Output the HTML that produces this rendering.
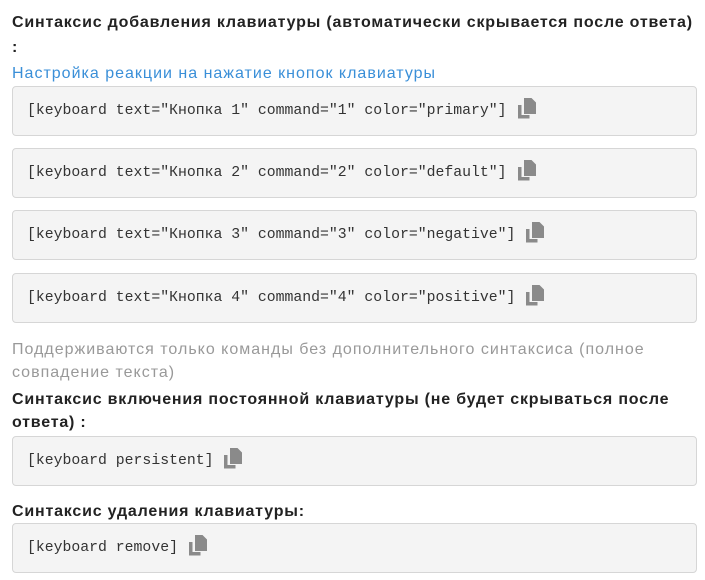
<!DOCTYPE html>
<html><head><meta charset="utf-8"><style>
body{margin:0;background:#fff;width:705px;height:580px;overflow:hidden;font-family:"Liberation Sans","Noto Sans CJK SC",sans-serif;color:#222}
.h{position:absolute;left:12px;font-weight:bold;font-size:16px;line-height:23px;color:#222;letter-spacing:0.8px;white-space:nowrap}
.box{position:absolute;left:12px;width:683px;height:48px;background:#f4f4f4;border:1px solid #d6d6d6;border-radius:4px}
.box span{position:absolute;left:14px;top:16px;font-family:"Liberation Mono",monospace;font-size:14.8px;color:#333;white-space:pre;display:flex;align-items:center}
.box svg{margin-left:10px;margin-top:-6px;flex-shrink:0;width:20px;height:22px}
.t{position:absolute;left:12px;font-size:16px;line-height:23px;letter-spacing:1px;white-space:nowrap}
</style></head><body>
<div class="h" style="top:11px">Синтаксис добавления клавиатуры (автоматически скрывается после ответа)</div>
<div class="h" style="top:36px">:</div>
<div class="t" style="top:62px;color:#3a8fd8">Настройка реакции на нажатие кнопок клавиатуры</div>
<div class="box" style="top:86px"><span>[keyboard text="Кнопка 1" command="1" color="primary"]<svg viewBox="0 0 20 22"><path d="M1 8h3.5v10h8v3.5H1z" fill="#8a8a8a"/><path d="M7 1h7.5l4.5 4.5V17H7z" fill="#8a8a8a"/></svg></span></div>
<div class="box" style="top:148px"><span>[keyboard text="Кнопка 2" command="2" color="default"]<svg viewBox="0 0 20 22"><path d="M1 8h3.5v10h8v3.5H1z" fill="#8a8a8a"/><path d="M7 1h7.5l4.5 4.5V17H7z" fill="#8a8a8a"/></svg></span></div>
<div class="box" style="top:210px"><span>[keyboard text="Кнопка 3" command="3" color="negative"]<svg viewBox="0 0 20 22"><path d="M1 8h3.5v10h8v3.5H1z" fill="#8a8a8a"/><path d="M7 1h7.5l4.5 4.5V17H7z" fill="#8a8a8a"/></svg></span></div>
<div class="box" style="top:273px"><span>[keyboard text="Кнопка 4" command="4" color="positive"]<svg viewBox="0 0 20 22"><path d="M1 8h3.5v10h8v3.5H1z" fill="#8a8a8a"/><path d="M7 1h7.5l4.5 4.5V17H7z" fill="#8a8a8a"/></svg></span></div>
<div class="t" style="top:338px;color:#999">Поддерживаются только команды без дополнительного синтаксиса (полное<br>совпадение текста)</div>
<div class="h" style="top:388px">Синтаксис включения постоянной клавиатуры (не будет скрываться после<br>ответа) :</div>
<div class="box" style="top:436px"><span>[keyboard persistent]<svg viewBox="0 0 20 22"><path d="M1 8h3.5v10h8v3.5H1z" fill="#8a8a8a"/><path d="M7 1h7.5l4.5 4.5V17H7z" fill="#8a8a8a"/></svg></span></div>
<div class="h" style="top:500px">Синтаксис удаления клавиатуры:</div>
<div class="box" style="top:523px"><span>[keyboard remove]<svg viewBox="0 0 20 22"><path d="M1 8h3.5v10h8v3.5H1z" fill="#8a8a8a"/><path d="M7 1h7.5l4.5 4.5V17H7z" fill="#8a8a8a"/></svg></span></div>
</body></html>
